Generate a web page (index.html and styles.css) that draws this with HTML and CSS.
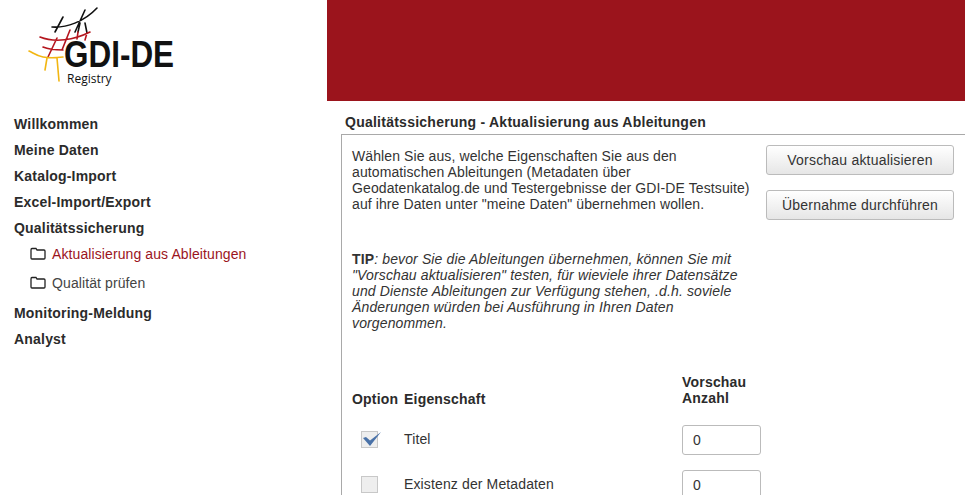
FILE: index.html
```html
<!DOCTYPE html>
<html>
<head>
<meta charset="utf-8">
<title>GDI-DE Registry</title>
<link rel="stylesheet" href="styles.css">
</head>
<body>
<div class="page">
    <div class="sidebar">
        <div class="logo">
            <svg class="logo-net" width="110" height="90" viewBox="0 0 110 90">
                <g fill="none" stroke-width="1.6" stroke-linecap="round">
                    <path stroke="#111" d="M52 27C66 28 84 22 97 8M85 10L75 32M63 17L55 32M80 23L78 32M85 23L87 33"/>
                    <path stroke="#b5161e" d="M40 37C55 43 74 40 90 32M57 38L48 57M70 30L62 50M78 32L77 39M87 33L85 40M43 47C50 50 56 50 63 50"/>
                    <path stroke="#f2b612" d="M29 51C36 54 40 60 63 57M47 58L45 70M57 58L59 81"/>
                </g>
            </svg>
            <span class="logo-name">GDI-DE</span>
            <span class="logo-sub">Registry</span>
        </div>
        <ul class="nav">
            <li class="nav-main">Willkommen</li>
            <li class="nav-main">Meine Daten</li>
            <li class="nav-main">Katalog-Import</li>
            <li class="nav-main">Excel-Import/Export</li>
            <li class="nav-main">Qualitätssicherung</li>
            <li class="nav-sub nav-active">
                <svg class="folder" width="16" height="13" viewBox="0 0 16 13"><path d="M1 3V11Q1 12 2 12H14Q15 12 15 11V4Q15 3 14 3H7L6 1.500H2Q1 1.500 1 3Z" fill="none" stroke="#222" stroke-width="1.300"/></svg>
                Aktualisierung aus Ableitungen
            </li>
            <li class="nav-sub">
                <svg class="folder" width="16" height="13" viewBox="0 0 16 13"><path d="M1 3V11Q1 12 2 12H14Q15 12 15 11V4Q15 3 14 3H7L6 1.500H2Q1 1.500 1 3Z" fill="none" stroke="#222" stroke-width="1.300"/></svg>
                Qualität prüfen
            </li>
            <li class="nav-main">Monitoring-Meldung</li>
            <li class="nav-main">Analyst</li>
        </ul>
    </div>
    <div class="content">
        <div class="banner"></div>
        <h1 class="title">Qualitätssicherung - Aktualisierung aus Ableitungen</h1>
        <div class="panel">
            <div class="intro">
                <p class="intro-text">Wählen Sie aus, welche Eigenschaften Sie aus den automatischen Ableitungen (Metadaten über Geodatenkatalog.de und Testergebnisse der GDI-DE Testsuite) auf ihre Daten unter "meine Daten" übernehmen wollen.</p>
                <div class="actions">
                    <button class="btn">Vorschau aktualisieren</button>
                    <button class="btn">Übernahme durchführen</button>
                </div>
            </div>
            <p class="tip"><b>TIP</b>: bevor Sie die Ableitungen übernehmen, können Sie mit "Vorschau aktualisieren" testen, für wieviele ihrer Datensätze und Dienste Ableitungen zur Verfügung stehen, .d.h. soviele Änderungen würden bei Ausführung in Ihren Daten vorgenommen.</p>
            <div class="grid">
                <div class="head head-low">Option</div>
                <div class="head head-low">Eigenschaft</div>
                <div class="head">Vorschau<br>Anzahl</div>

                <div class="check-cell"><span class="check">
                    <svg width="22" height="18" viewBox="0 0 22 18"><path d="M3 9L6 8L10 11.500L21 3L10 17Z" fill="#4a72a8"/></svg>
                </span></div>
                <div class="label">Titel</div>
                <div><input class="count" value="0"></div>

                <div class="check-cell"><span class="check"></span></div>
                <div class="label">Existenz der Metadaten</div>
                <div><input class="count" value="0"></div>
            </div>
        </div>
    </div>
</div>
</body>
</html>
```

FILE: styles.css
```css
html, body {
    margin: 0;
    height: 495px;
    overflow: hidden;
    background-color: #fff;
    font-family: "Liberation Sans", Arial, sans-serif;
    font-size: 14px;
    color: #333;
}
.page {
    display: flex;
    height: 495px;
    overflow: hidden;
}
.sidebar {
    width: 327px;
    flex-shrink: 0;
}
.logo {
    position: relative;
    height: 111px;
}
.logo-net {
    position: absolute;
    left: 0;
    top: 0;
}
.logo-name {
    position: absolute;
    left: 64px;
    top: 39px;
    font-size: 37px;
    line-height: 32px;
    font-weight: bold;
    color: #111;
    transform: scaleX(0.85);
    transform-origin: left;
}
.logo-sub {
    position: absolute;
    left: 67px;
    top: 71px;
    font-family: "Open Sans", sans-serif;
    font-size: 12px;
    line-height: 15px;
    color: #111;
}
.nav {
    list-style: none;
    margin: 0;
    padding: 0 0 0 14px;
}
.nav-main {
    height: 26px;
    line-height: 26px;
    font-weight: bold;
    letter-spacing: 0.2px;
    color: #2b2b2b;
}
.nav-sub {
    display: flex;
    align-items: center;
    gap: 6px;
    height: 29px;
    padding-left: 16px;
    letter-spacing: 0.1px;
    color: #444;
}
.nav-active {
    margin-top: -2px;
    color: #9b141c;
}
.nav-sub + .nav-main {
    margin-top: 3px;
}
.folder {
    flex-shrink: 0;
}
.content {
    flex: 1;
    min-width: 0;
}
.banner {
    height: 101px;
    background-color: #9b141c;
}
.title {
    margin: 13px 0 0 18px;
    font-size: 14px;
    line-height: 16px;
    font-weight: bold;
    letter-spacing: 0.25px;
    color: #2b2b2b;
}
.panel {
    margin: 4px 0 0 14px;
    padding: 13px 11px 0 10px;
    border-top: 1px solid #a9a9a9;
    border-left: 1px solid #a9a9a9;
    height: 347px;
    overflow: hidden;
}
.intro {
    display: flex;
    justify-content: space-between;
}
.intro-text {
    margin: 0;
    width: 406px;
    line-height: 16px;
    letter-spacing: 0.1px;
}
.actions {
    display: flex;
    flex-direction: column;
    gap: 15px;
    margin-top: -3px;
}
.btn {
    width: 188px;
    height: 30px;
    padding: 0;
    border: 1px solid #bbb;
    border-radius: 3px;
    background: linear-gradient(#fff, #e6e6e6);
    font-family: inherit;
    font-size: 14px;
    letter-spacing: 0.2px;
    color: #333;
}
.tip {
    margin: 31px 0 0 0;
    width: 390px;
    line-height: 16px;
    letter-spacing: 0.13px;
    font-style: italic;
}
.tip b {
    font-style: normal;
}
.grid {
    display: grid;
    grid-template-columns: 52px 278px 90px;
    align-items: center;
    margin-top: 43px;
}
.head {
    padding-bottom: 11px;
    font-weight: bold;
    letter-spacing: 0.2px;
    line-height: 16px;
    align-self: end;
    color: #2b2b2b;
}
.head-low {
    padding-bottom: 10px;
}
.check-cell {
    padding-left: 9px;
    height: 45px;
    display: flex;
    align-items: center;
}
.check {
    display: block;
    position: relative;
    box-sizing: border-box;
    width: 17px;
    height: 17px;
    border: 1px solid #c8c8c8;
    background-color: #eee;
}
.check svg {
    position: absolute;
    left: -2px;
    top: -3px;
}
.label {
    margin-top: -2px;
    letter-spacing: 0.13px;
}
.count {
    display: block;
    box-sizing: border-box;
    width: 79px;
    height: 30px;
    padding: 0 10px;
    border: 1px solid #bbb;
    border-radius: 3px;
    font-family: inherit;
    font-size: 14px;
    color: #333;
}
```
